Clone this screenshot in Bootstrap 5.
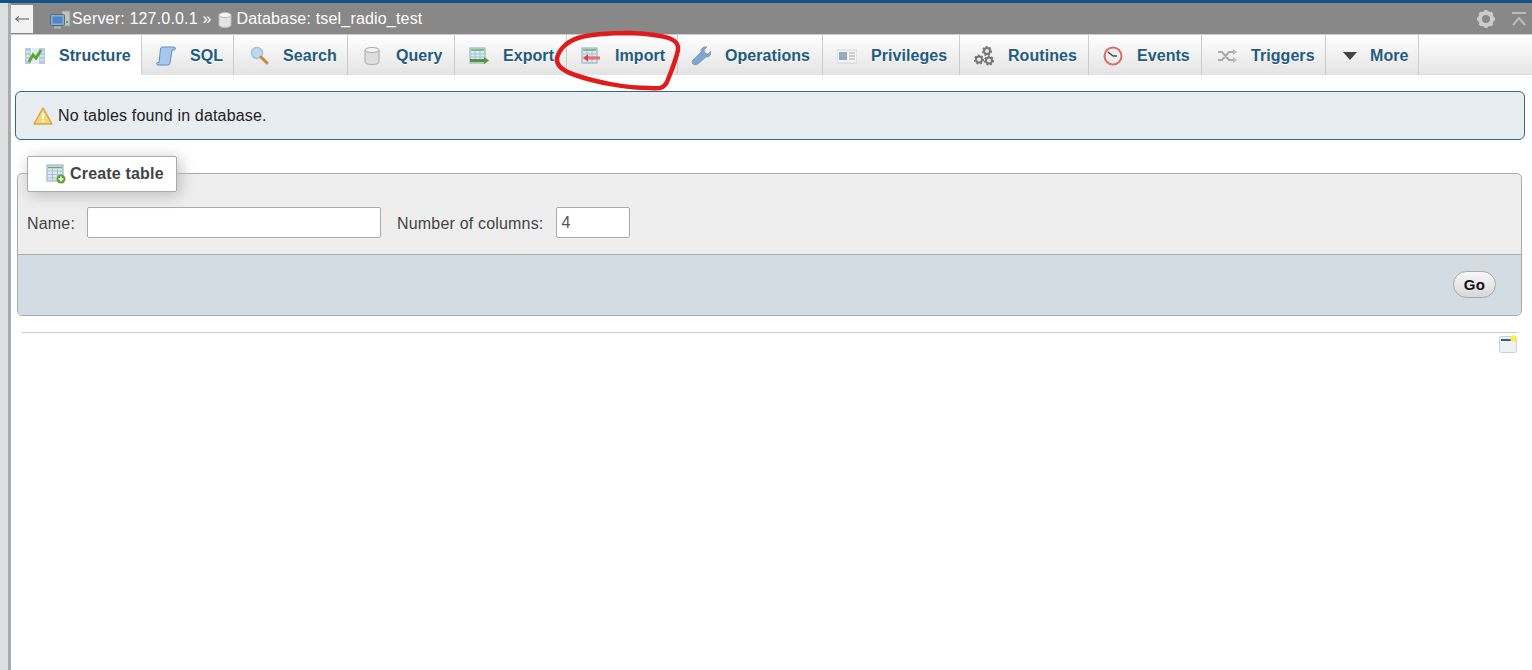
<!DOCTYPE html>
<html lang="en">
<head>
<meta charset="utf-8">
<title>phpMyAdmin</title>
<link href="https://cdn.jsdelivr.net/npm/bootstrap@5.3.0/dist/css/bootstrap.min.css" rel="stylesheet">
<style>
html,body{height:100%;overflow:hidden}
body{font-family:"Liberation Sans",Arial,sans-serif;font-size:16px;color:#444;background:#fff;position:relative;letter-spacing:.18px}
.shell{height:670px}
.rail-a{width:8px;background:#dcdfdf;flex:none}
.rail-b{width:3px;background:#aaa;flex:none}
.main-area{min-width:0;background:#fff}
.top-blue{height:3px;background:#135488;margin-left:-11px}
.crumbs{height:31px;background:#888;color:#fff;line-height:31px}
.back-btn{width:22px;height:28px;margin-top:2px;background:#f2f2f2;display:flex;align-items:center;justify-content:center}
.crumb-ico{flex:none;display:block}
.crumb-srv{margin:7px 1px 0 17px}
.crumb-db{margin:9px 5px 0 6px}
.tabs-row{height:41px;border-top:1px solid #ccc;background:linear-gradient(#fff,#e6e6e6);border-bottom:1px solid #ddd}
.tab-item{display:flex;align-items:center;height:40px;padding:2px 0 0 14px;border-right:1px solid #ccc;color:#235a81;font-weight:700;text-decoration:none;letter-spacing:.06px;background:linear-gradient(#fff,#e3e3e3);text-shadow:0 1px 0 #fff}
.tab-item svg{width:20px;height:20px;margin-right:14px;flex:none}
.tab-item.now{background:#fff}
.w-struct{width:131px}.w-sql{width:92px}.w-search{width:114px;padding-left:15px}.w-query{width:107px}.w-export{width:112px}.w-import{width:111px}.w-ops{width:145px;padding-left:13px}.w-priv{width:137px}.w-rout{width:129px}.w-event{width:113px}.w-trig{width:124px;padding-left:15px}.w-more{width:93px}
.tab-item.w-more svg{margin-right:10px}
.notice-box{margin:16px 7px 0 4px;height:49px;background:#e8edf2;border:1px solid #2f6b7e;border-radius:6px;color:#222;padding-left:17px}
.notice-ico{margin-right:5px;flex:none}
.form-panel{margin:33px 10px 0 6px;height:143px;background:#eee;border:1px solid #aaa;border-radius:5px;position:relative}
.legend-box{position:absolute;left:9px;top:-18px;width:150px;height:36px;background:#fff;border:1px solid #aaa;border-radius:2px;box-shadow:3px 3px 15px #bbb;font-weight:700;padding-left:18px;gap:4px}
.panel-body-top{height:81px;padding:17px 9px 0 9px;border-bottom:1px solid #aaa}
.panel-body-top label{padding-top:2px}
.panel-foot{height:60px;background:#d3dce3;border-radius:0 0 5px 5px;padding:0 25px 2px 0}
.txt-in{height:31px;background:#fff;border:1px solid #aaa;border-radius:2px;padding:0 4px;color:#555;font:16px "Liberation Sans",Arial,sans-serif}
.in-name{width:294px;margin-left:12px}
.in-cols{width:74px;margin-left:13px}
.lbl-cols{margin-left:16px}
.go-pill{width:43px;height:27px;padding:0;border:1px solid #aaa;border-radius:14px;background:linear-gradient(#f8f8f8,#d8d8d8);font-weight:700;color:#111;font-size:15px;line-height:25px;letter-spacing:.4px}
.rule-line{margin:16px 14px 0 11px;height:1px;background:#ccc}
.console-wrap{padding-right:15px;margin-top:2px}
.scribble{position:absolute;left:550px;top:28px;width:135px;height:66px;pointer-events:none}
.tools-box{padding-right:5px;gap:15px}
.tool-ico{flex:none}
</style>
</head>
<body>
<div class="d-flex shell">
  <div class="rail-a"></div>
  <div class="rail-b"></div>
  <div class="main-area flex-grow-1">
    <div class="top-blue"></div>
    <div class="crumbs d-flex">
      <div class="back-btn"><svg width="16" height="8" viewBox="0 0 16 8"><path d="M15 4H2M5 1.500L1.500 4 5 6.500" fill="none" stroke="#555" stroke-width="1"/></svg></div>
      <svg class="crumb-ico crumb-srv" width="21" height="20" viewBox="0 0 21 20"><path d="M12 1h8v15h-8z" fill="#c4c4c4" stroke="#999"/><rect x="0.500" y="4.500" width="14" height="11" rx="1" fill="#8fa9c6" stroke="#5e6a78"/><rect x="2.500" y="6.500" width="10" height="7" fill="#4d87c7"/><path d="M4 16.500h7v2H4z" fill="#b5b5b5"/><path d="M16 12h2" stroke="#4caf50" stroke-width="2"/></svg>
      <span class="text-nowrap">Server: 127.0.0.1 »</span>
      <svg class="crumb-ico crumb-db" width="14" height="16" viewBox="0 0 14 16"><path d="M1 3v10c0 1.500 2.500 2.500 6 2.500s6-1 6-2.500V3z" fill="#e4e4e4" stroke="#bbb"/><ellipse cx="7" cy="3" rx="6" ry="2.500" fill="#f5f5f5" stroke="#bbb"/></svg>
      <span class="text-nowrap">Database: tsel_radio_test</span>
      <div class="ms-auto d-flex align-items-center tools-box">
        <svg class="tool-ico" width="20" height="20" viewBox="0 0 20 20"><circle cx="10" cy="10" r="6" fill="none" stroke="#ccc" stroke-width="4"/><path d="M10 1v4M10 15v4M1 10h4M15 10h4M3.600 3.600l3 3M13.400 13.400l3 3M16.400 3.600l-3 3M6.600 13.400l-3 3" stroke="#ccc" stroke-width="3"/></svg>
        <svg class="tool-ico" width="16" height="16" viewBox="0 0 16 16"><path d="M1 2h14M2 14l6-7 6 7" fill="none" stroke="#bbb" stroke-width="2"/></svg>
      </div>
    </div>
    <nav class="tabs-row d-flex">
      <a class="tab-item now w-struct" href="#"><svg viewBox="0 0 20 20"><path d="M0 2h6v16H0zM14 2h6v16h-6z" fill="#b4cbe4"/><path d="M7 2h6v16H7z" fill="#e4ebf3"/><path d="M1 6h4M1 10h4M1 14h4M15 6h4M15 10h4M15 14h4" stroke="#eef3f8"/><path d="M4 16l4-7 3 3 5-8" fill="none" stroke="#5da532" stroke-width="3"/></svg><span>Structure</span></a>
      <a class="tab-item w-sql" href="#"><svg viewBox="0 0 20 20"><path d="M6 1h12c1.500 0 2 2 .500 3H16l-2 13c-.3 1.500-1 2-2.500 2H2c-1.500 0-2-2-.5-2.500H3L4.500 3C4.800 1.500 5 1 6 1z" fill="#a8c7ea" stroke="#5f8fc4"/></svg><span>SQL</span></a>
      <a class="tab-item w-search" href="#"><svg viewBox="0 0 20 20"><circle cx="8" cy="7" r="5.500" fill="#bcd9f2" stroke="#a9c1d8" stroke-width="1.500"/><path d="M12 11l6 6" stroke="#c98b3b" stroke-width="3" stroke-linecap="round"/></svg><span>Search</span></a>
      <a class="tab-item w-query" href="#"><svg viewBox="0 0 20 20"><path d="M3 4v12c0 1.500 3 2.500 7 2.500s7-1 7-2.500V4z" fill="#dedede" stroke="#a8a8a8"/><ellipse cx="10" cy="4" rx="7" ry="2.500" fill="#f4f4f4" stroke="#a8a8a8"/></svg><span>Query</span></a>
      <a class="tab-item w-export" href="#"><svg viewBox="0 0 20 20"><rect x="1" y="2" width="15" height="15" fill="#dce8f4" stroke="#8aa8c8"/><path d="M2 4h13" stroke="#6cb04a" stroke-width="1.500"/><path d="M2 8h13M2 11h13M6 5v11M11 5v11" stroke="#a7c0d9"/><path d="M1 13h14v3H1z" fill="#4f9a34"/><path d="M15 11l5 3.500-5 3.500z" fill="#4f9a34"/></svg><span>Export</span></a>
      <a class="tab-item w-import" href="#"><svg viewBox="0 0 20 20"><rect x="1" y="2" width="15" height="15" fill="#dce8f4" stroke="#8aa8c8"/><path d="M2 4h13" stroke="#6cb04a" stroke-width="1.500"/><path d="M2 8h13M2 11h13M6 5v11M11 5v11" stroke="#a7c0d9"/><path d="M6 10.500h13v3H6z" fill="#ee6b6b"/><path d="M7 8.500L2 12l5 3.500z" fill="#e8383c"/></svg><span>Import</span></a>
      <a class="tab-item w-ops" href="#"><svg viewBox="0 0 20 20"><path d="M2 18c-1.500-1.500-1-3 0-4l8-8c-.5-3 2-6 6-5l-3 3 1 3 3 1 3-3c.500 4-2 6.500-5 6l-8 7c-1.500 1-3.500 1.500-5 0z" fill="#7ea5d8" stroke="#8a8a8a" stroke-width=".6"/></svg><span>Operations</span></a>
      <a class="tab-item w-priv" href="#"><svg viewBox="0 0 20 20"><rect x="0" y="4" width="20" height="13" fill="#f4f4f4" stroke="#d5d5d5"/><rect x="2" y="6" width="8" height="8" fill="#7fb0dc"/><circle cx="6" cy="9" r="2" fill="#e0a060"/><path d="M12 7h6M12 10h6M12 13h6" stroke="#aaa"/></svg><span>Privileges</span></a>
      <a class="tab-item w-rout" href="#"><svg viewBox="0 0 20 20"><g fill="#ececec" stroke="#777" stroke-width="2"><circle cx="13" cy="5" r="3"/><circle cx="5" cy="13.500" r="3"/><circle cx="15" cy="14.500" r="3"/></g><g fill="none" stroke="#777" stroke-width="1.800" stroke-dasharray="1.800 1.800"><circle cx="13" cy="5" r="4.200"/><circle cx="5" cy="13.500" r="4.200"/><circle cx="15" cy="14.500" r="4.200"/></g></svg><span>Routines</span></a>
      <a class="tab-item w-event" href="#"><svg viewBox="0 0 20 20"><circle cx="10" cy="10" r="8.500" fill="#eee" stroke="#e06a6a" stroke-width="2"/><path d="M10 10L5 6M10 10h4" stroke="#444" stroke-width="1.500"/></svg><span>Events</span></a>
      <a class="tab-item w-trig" href="#"><svg viewBox="0 0 20 20"><path d="M1 6h4l7 8h5M1 14h4l7-8h5" fill="none" stroke="#aaa" stroke-width="2"/><path d="M16 3l4 3-4 3zM16 11l4 3-4 3z" fill="#bbb"/></svg><span>Triggers</span></a>
      <a class="tab-item w-more" href="#"><svg viewBox="0 0 20 20"><path d="M3 6h14l-7 8z" fill="#444"/></svg><span>More</span></a>
    </nav>
    <div class="notice-box d-flex align-items-center">
      <svg width="20" height="20" viewBox="0 0 20 20" class="notice-ico"><path d="M10 2L19 18H1z" fill="#f8d77a" stroke="#d9a441" stroke-width="1.500" stroke-linejoin="round"/><path d="M10 7v6M10 14.500v1.500" stroke="#fff" stroke-width="2"/></svg>
      <span>No tables found in database.</span>
    </div>
    <div class="form-panel">
      <div class="legend-box d-flex align-items-center">
        <svg width="20" height="20" viewBox="0 0 20 20"><rect x="1" y="1" width="16" height="16" fill="#dce8f4" stroke="#8aa8c8"/><path d="M2 3.500h14" stroke="#6cb04a" stroke-width="1.500"/><path d="M2 7h14M2 10.500h14M2 14h14M6.500 5v11M11.500 5v11" stroke="#a7c0d9"/><circle cx="15" cy="15" r="4.500" fill="#5da532"/><path d="M12.500 15h5M15 12.500v5" stroke="#fff" stroke-width="1.500"/></svg>
        <span>Create table</span>
      </div>
      <div class="panel-body-top d-flex align-items-center">
        <label for="tname">Name:</label>
        <input id="tname" class="txt-in in-name" type="text">
        <label for="tcols" class="lbl-cols">Number of columns:</label>
        <input id="tcols" class="txt-in in-cols" type="text" value="4">
      </div>
      <div class="panel-foot d-flex align-items-center justify-content-end">
        <button class="go-pill" type="button">Go</button>
      </div>
    </div>
    <div class="rule-line"></div>
    <div class="console-wrap d-flex justify-content-end">
      <svg width="18" height="18" viewBox="0 0 18 18"><rect x="0.500" y="1.500" width="17" height="16" rx="2" fill="#eef1f4" stroke="#cfcfcf"/><path d="M2 5h11" stroke="#2f5f9a" stroke-width="2"/><circle cx="14.500" cy="3.500" r="3.200" fill="#f6ee4a"/></svg>
    </div>
  </div>
</div>
<svg class="scribble" viewBox="550 28 135 66"><path d="M632 33C610 33 590 34 578 38C566 42 559 50 557 58C556 66 563 71 575 75C595 82 625 88 650 88C660 89 664 88 667 82C671 72 676 60 678 50C679 42 673 38 660 36C650 34 640 33 625 33" fill="none" stroke="#e01b1b" stroke-width="4.500" stroke-linecap="round"/></svg>
<script src="https://cdn.jsdelivr.net/npm/bootstrap@5.3.0/dist/js/bootstrap.bundle.min.js"></script>
</body>
</html>
